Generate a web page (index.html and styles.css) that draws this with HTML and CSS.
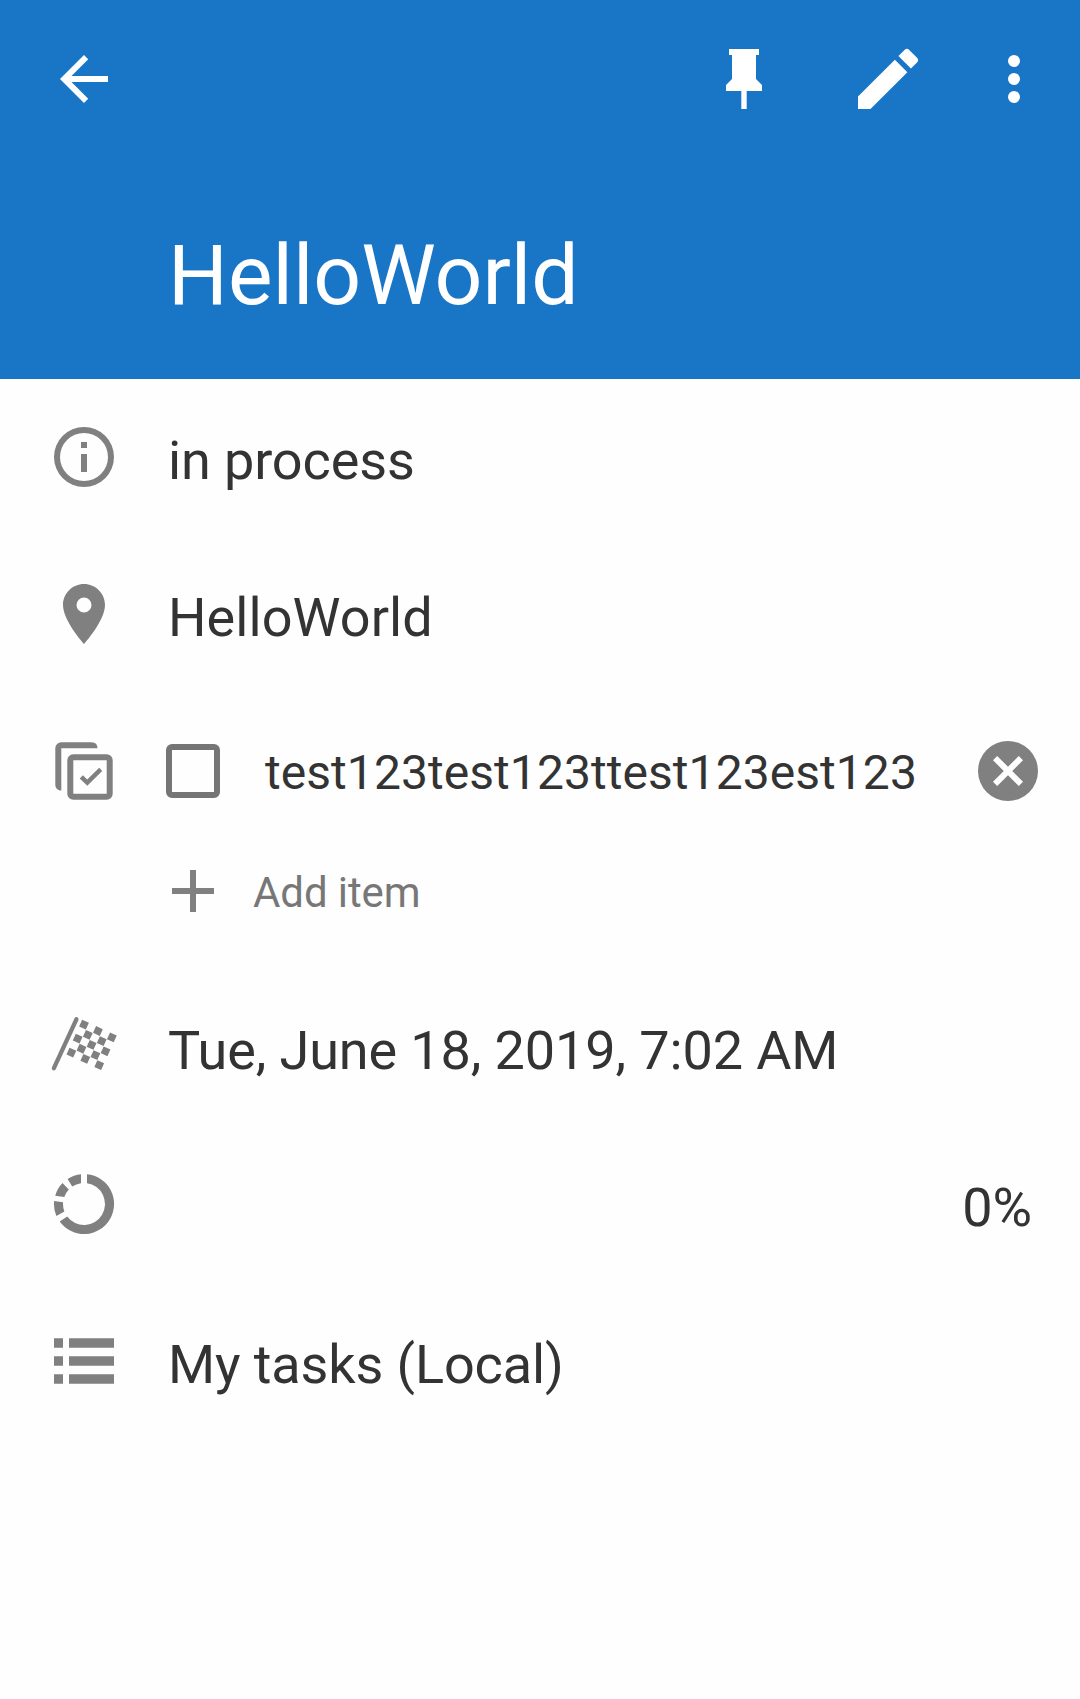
FILE: index.html
```html
<!DOCTYPE html>
<html lang="en">
<head>
<meta charset="utf-8">
<title>HelloWorld</title>
<link rel="stylesheet" href="styles.css">
</head>
<body>
<header class="header">
  <div class="toolbar">
    <svg class="icon" viewBox="0 0 24 24"><path d="M20 11H7.83l5.59-5.59L12 4l-8 8 8 8 1.41-1.41L7.83 13H20z"/></svg>
    <div class="actions">
      <svg class="icon" viewBox="0 0 24 24"><path d="M16 12V4h1V2H7v2h1v8l-2 2v2h5.1v6h1.8v-6H18v-2z"/></svg>
      <svg class="icon pencil" viewBox="0 0 24 24"><path d="M3 17.25V21h3.75L17.81 9.94l-3.75-3.75zM20.71 7.04a1 1 0 0 0 0-1.41l-2.34-2.34a1 1 0 0 0-1.41 0l-1.83 1.83 3.75 3.75z"/></svg>
      <svg class="icon" viewBox="0 0 24 24"><circle cx="12" cy="6" r="2"/><circle cx="12" cy="12" r="2"/><circle cx="12" cy="18" r="2"/></svg>
    </div>
  </div>
  <h1 class="title">HelloWorld</h1>
</header>
<main>
  <section class="row">
    <svg class="icon" viewBox="0 0 24 24"><path d="M11 17h2v-6h-2zm1-15a10 10 0 1 0 0 20 10 10 0 0 0 0-20zm0 18a8 8 0 1 1 0-16 8 8 0 0 1 0 16zM11 9h2V7h-2z"/></svg>
    <p class="text">in process</p>
  </section>
  <section class="row">
    <svg class="icon" viewBox="0 0 24 24"><path d="M12 2C8.13 2 5 5.13 5 9c0 5.25 7 13 7 13s7-7.75 7-13c0-3.87-3.13-7-7-7zm0 9.5a2.5 2.5 0 1 1 0-5 2.5 2.5 0 0 1 0 5z"/></svg>
    <p class="text location">HelloWorld</p>
  </section>
  <section class="row checklist">
    <svg class="icon" viewBox="0 0 72 72">
      <path d="M13.3 55.5C9.500 55.500 7.300 53 7.300 49.500V13.300a6 6 0 0 1 6-6H43.500q6 0 6 6H13.300z"/>
      <path fill-rule="evenodd" d="M25.300 19.300H58.700a6 6 0 0 1 6 6V58.700a6 6 0 0 1-6 6H25.300a6 6 0 0 1-6-6V25.300a6 6 0 0 1 6-6zm0 6V58.700H58.700V25.300z"/>
      <path d="M31.700 43.500l3.200-3.300 4.300 4.200L51.200 32.700 54.200 36 39.300 50.700z"/>
    </svg>
    <div class="items">
      <div class="item">
        <svg class="icon box" viewBox="0 0 24 24"><path d="M19 5v14H5V5zm0-2H5a2 2 0 0 0-2 2v14a2 2 0 0 0 2 2h14a2 2 0 0 0 2-2V5a2 2 0 0 0-2-2z"/></svg>
        <span class="item-text">test123test123ttest123est123</span>
        <svg class="icon" viewBox="0 0 24 24"><path d="M12 2a10 10 0 1 0 0 20 10 10 0 0 0 0-20zm5 13.590L15.590 17 12 13.410 8.410 17 7 15.590 10.590 12 7 8.410 8.410 7 12 10.590 15.590 7 17 8.410 13.410 12z"/></svg>
      </div>
      <div class="item">
        <svg class="icon" viewBox="0 0 24 24"><path d="M19 13h-6v6h-2v-6H5v-2h6V5h2v6h6z"/></svg>
        <span class="add-text">Add item</span>
      </div>
    </div>
  </section>
  <section class="row">
    <svg class="icon flag" viewBox="0 0 72 72">
      <path d="M28.400 8.300L5.900 57.200" stroke="#808080" stroke-width="4.300" stroke-linecap="round"/>
      <path transform="translate(36 13.700) rotate(24.400)" d="M-3.700-3.700h7.400v7.400h-7.400zM11.600-3.700h7.400v7.400h-7.400zM26.900-3.700h7.400v7.400h-7.400zM3.950 3.950h7.400v7.400h-7.400zM19.250 3.950h7.400v7.400h-7.400zM-3.700 11.600h7.400v7.400h-7.400zM11.600 11.600h7.400v7.400h-7.400zM26.900 11.600h7.400v7.400h-7.400zM3.950 19.250h7.400v7.400h-7.400zM19.250 19.250h7.400v7.400h-7.400zM-3.700 26.900h7.400v7.400h-7.400zM11.600 26.900h7.400v7.400h-7.400zM26.900 26.900h7.400v7.400h-7.400z"/>
    </svg>
    <p class="text">Tue, June 18, 2019, 7:02 AM</p>
  </section>
  <section class="row">
    <svg class="icon" viewBox="-36 -36 72 72"><path d="M3-29.850A30 30 0 1 1-24.300 17.500L-16.800 12.600A21 21 0 1 0 3-20.800zM-27.600 12A30 30 0 0 1-29.900-3L-20.900-1.800A21 21 0 0 0-19.600 7.600zM-28.800-8.300A30 30 0 0 1-21.500-21L-15.200-14.500A21 21 0 0 0-19.700-7zM-16.400-25.100A30 30 0 0 1-3-29.850V-20.800A21 21 0 0 0-11.800-17.400z"/></svg>
    <p class="text percent">0%</p>
  </section>
  <section class="row">
    <svg class="icon" viewBox="0 0 72 72"><path d="M6 13.300h9v9.400H6zM21 13.300h45v9.400H21zM6 31.300h9v9.400H6zM21 31.300h45v9.400H21zM6 49.300h9v9.400H6zM21 49.300h45v9.400H21z"/></svg>
    <p class="text">My tasks (Local)</p>
  </section>
</main>
</body>
</html>
```
FILE: styles.css
```css
* { box-sizing: border-box; }
body {
  margin: 0;
  background: #fefefe;
  color: #333;
  font-family: Roboto, sans-serif;
}
.header {
  height: 379px;
  background: #1976c7;
  color: #fff;
}
.toolbar {
  display: flex;
  justify-content: space-between;
  padding: 43px 30px 0 48px;
}
.actions {
  display: flex;
  align-items: center;
  gap: 68px;
}
.icon {
  display: block;
  flex: none;
  width: 72px;
  height: 72px;
  fill: #808080;
}
.header .icon { fill: #fff; }
.header .pencil {
  width: 80px;
  height: 80px;
  margin: -4px -18px -4px 0;
}
.title {
  margin: 111px 0 0 168px;
  font-size: 84px;
  line-height: 100px;
  font-weight: 400;
}
.row {
  display: flex;
  align-items: flex-start;
  height: 157px;
  padding: 42px 48px 0;
}
.text {
  flex: 1;
  margin: 8px 0 0 48px;
  font-size: 54px;
  line-height: 63px;
  letter-spacing: -0.12px;
  white-space: nowrap;
}
.location { letter-spacing: 0.08px; }
.percent { text-align: right; }
.checklist {
  height: 276px;
  padding-right: 36px;
}
.items {
  flex: 1;
  display: flex;
  flex-direction: column;
  gap: 48px;
  margin-left: 37px;
}
.item {
  display: flex;
  align-items: center;
  height: 72px;
}
.box { fill: #757575; }
.item-text {
  flex: 1;
  margin-left: 36px;
  padding-top: 3px;
  font-size: 48px;
  line-height: 56px;
  letter-spacing: 0.06px;
}
.add-text {
  margin-left: 24px;
  padding-top: 3px;
  color: #777;
  font-size: 42px;
  line-height: 50px;
  letter-spacing: -0.1px;
}
```
